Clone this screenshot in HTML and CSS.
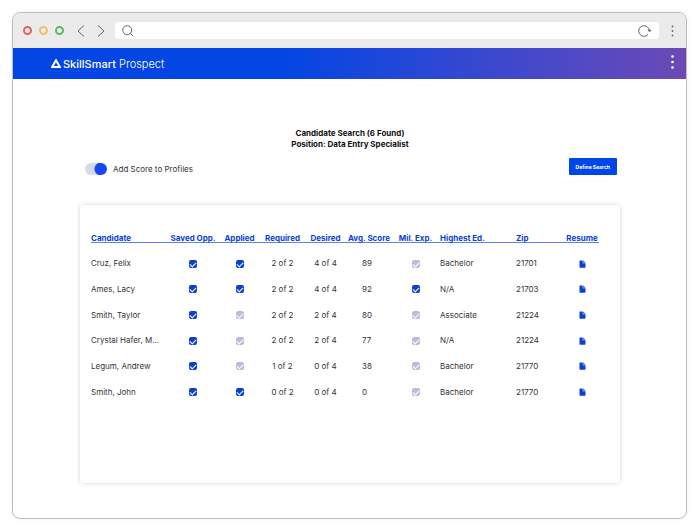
FILE: index.html
```html
<!DOCTYPE html>
<html lang="en">
<head>
  <meta charset="UTF-8" />
  <meta name="viewport" content="width=device-width, initial-scale=1.0"/>
  <title>SkillSmart Prospect</title>
  <link rel="stylesheet" href="styles.css">
</head>
<body>

  <!-- shared icons -->
  <svg class="sprite" aria-hidden="true">
    <symbol id="file" viewBox="0 0 7 8">
      <path d="M1 .5H3.700V2.700q0 .6.6.6H6.500V7q0 .7-.7.7H1.200Q.5 7.700.5 7V1Q.5.5 1 .5zM4.200.6 6.400 2.800H4.200z"/>
    </symbol>
  </svg>

  <div class="browser">
    <div class="browser-bar">
      <div class="dots">
        <span class="dot red"></span>
        <span class="dot yellow"></span>
        <span class="dot green"></span>
      </div>
      <div class="nav">
        <button type="button" class="icon-button" aria-label="Back">
          <svg width="8" height="12" viewBox="0 0 8 12"><path d="M7 .5 1 6l6 5.500"/></svg>
        </button>
        <button type="button" class="icon-button" aria-label="Forward">
          <svg width="8" height="12" viewBox="0 0 8 12"><path d="M1 .5 7 6l-6 5.500"/></svg>
        </button>
      </div>
      <div class="address">
        <svg width="12" height="12" viewBox="0 0 12 12"><circle cx="5.200" cy="5.200" r="4.500"/><path d="M8.300 8.300l3 3"/></svg>
        <input type="text" aria-label="Address">
        <button type="button" class="icon-button" aria-label="Reload">
          <svg width="14" height="12" viewBox="0 0 14 12"><path d="M11.300 6A5.300 5.300 0 1 0 10 9.500"/><path class="solid" d="M9.500 4.800h4L11.600 7.300z"/></svg>
        </button>
      </div>
      <button type="button" class="icon-button" aria-label="Browser menu">
        <svg class="solid" width="3" height="12" viewBox="0 0 3 12"><circle cx="1.500" cy="1.500" r=".9"/><circle cx="1.500" cy="6" r=".9"/><circle cx="1.500" cy="10.500" r=".9"/></svg>
      </button>
    </div>

    <header class="app-header">
      <div class="logo">
        <svg width="10" height="9" viewBox="0 0 10 9"><path d="M5 1.200 8.900 8H1.100z"/></svg>
        <div><b>SkillSmart</b> Prospect</div>
      </div>
      <button type="button" class="icon-button light" aria-label="Menu">
        <svg class="solid" width="3" height="14" viewBox="0 0 3 14"><circle cx="1.500" cy="1.500" r="1.300"/><circle cx="1.500" cy="7" r="1.300"/><circle cx="1.500" cy="12.500" r="1.300"/></svg>
      </button>
    </header>

    <main>
      <h1>Candidate Search (6 Found)<br>Position: Data Entry Specialist</h1>

      <div class="toolbar">
        <label class="toggle"><input type="checkbox" role="switch" checked> Add Score to Profiles</label>
        <button type="button" class="define">Define Search</button>
      </div>

      <div class="panel">
        <table>
          <colgroup>
            <col class="c-name"><col class="c-saved"><col class="c-applied"><col class="c-count"><col class="c-count">
            <col class="c-score"><col class="c-mil"><col class="c-ed"><col class="c-zip"><col class="c-resume">
          </colgroup>
          <thead>
            <tr>
              <th><a href="#">Candidate</a></th>
              <th class="center"><a href="#">Saved Opp.</a></th>
              <th class="center"><a href="#">Applied</a></th>
              <th class="center"><a href="#">Required</a></th>
              <th class="center"><a href="#">Desired</a></th>
              <th class="center"><a href="#">Avg. Score</a></th>
              <th class="center"><a href="#">Mil. Exp.</a></th>
              <th><a href="#">Highest Ed.</a></th>
              <th><a href="#">Zip</a></th>
              <th class="center"><a href="#">Resume</a></th>
            </tr>
          </thead>
          <tbody>
            <tr>
              <td>Cruz, Felix</td>
              <td class="center"><input type="checkbox" class="check" aria-label="Saved" checked></td>
              <td class="center"><input type="checkbox" class="check" aria-label="Applied" checked></td>
              <td class="center">2 of 2</td>
              <td class="center">4 of 4</td>
              <td class="score">89</td>
              <td class="center"><input type="checkbox" class="check" aria-label="Military experience"></td>
              <td>Bachelor</td>
              <td>21701</td>
              <td class="center"><a href="#" aria-label="Resume"><svg class="file"><use href="#file"/></svg></a></td>
            </tr>
            <tr>
              <td>Ames, Lacy</td>
              <td class="center"><input type="checkbox" class="check" aria-label="Saved" checked></td>
              <td class="center"><input type="checkbox" class="check" aria-label="Applied" checked></td>
              <td class="center">2 of 2</td>
              <td class="center">4 of 4</td>
              <td class="score">92</td>
              <td class="center"><input type="checkbox" class="check" aria-label="Military experience" checked></td>
              <td>N/A</td>
              <td>21703</td>
              <td class="center"><a href="#" aria-label="Resume"><svg class="file"><use href="#file"/></svg></a></td>
            </tr>
            <tr>
              <td>Smith, Taylor</td>
              <td class="center"><input type="checkbox" class="check" aria-label="Saved" checked></td>
              <td class="center"><input type="checkbox" class="check" aria-label="Applied"></td>
              <td class="center">2 of 2</td>
              <td class="center">2 of 4</td>
              <td class="score">80</td>
              <td class="center"><input type="checkbox" class="check" aria-label="Military experience"></td>
              <td>Associate</td>
              <td>21224</td>
              <td class="center"><a href="#" aria-label="Resume"><svg class="file"><use href="#file"/></svg></a></td>
            </tr>
            <tr>
              <td>Crystal Hafer, M...</td>
              <td class="center"><input type="checkbox" class="check" aria-label="Saved" checked></td>
              <td class="center"><input type="checkbox" class="check" aria-label="Applied"></td>
              <td class="center">2 of 2</td>
              <td class="center">2 of 4</td>
              <td class="score">77</td>
              <td class="center"><input type="checkbox" class="check" aria-label="Military experience"></td>
              <td>N/A</td>
              <td>21224</td>
              <td class="center"><a href="#" aria-label="Resume"><svg class="file"><use href="#file"/></svg></a></td>
            </tr>
            <tr>
              <td>Legum, Andrew</td>
              <td class="center"><input type="checkbox" class="check" aria-label="Saved" checked></td>
              <td class="center"><input type="checkbox" class="check" aria-label="Applied"></td>
              <td class="center">1 of 2</td>
              <td class="center">0 of 4</td>
              <td class="score">38</td>
              <td class="center"><input type="checkbox" class="check" aria-label="Military experience"></td>
              <td>Bachelor</td>
              <td>21770</td>
              <td class="center"><a href="#" aria-label="Resume"><svg class="file"><use href="#file"/></svg></a></td>
            </tr>
            <tr>
              <td>Smith, John</td>
              <td class="center"><input type="checkbox" class="check" aria-label="Saved" checked></td>
              <td class="center"><input type="checkbox" class="check" aria-label="Applied" checked></td>
              <td class="center">0 of 2</td>
              <td class="center">0 of 4</td>
              <td class="score">0</td>
              <td class="center"><input type="checkbox" class="check" aria-label="Military experience"></td>
              <td>Bachelor</td>
              <td>21770</td>
              <td class="center"><a href="#" aria-label="Resume"><svg class="file"><use href="#file"/></svg></a></td>
            </tr>
          </tbody>
        </table>
      </div>
    </main>
  </div>

</body>
</html>
```
FILE: styles.css
```css
* {
  box-sizing: border-box;
  margin: 0;
  padding: 0;
  font-family: Inter, 'Open Sans', sans-serif;
}

body {
  min-height: 100vh;
  padding: 12px 13px 10px 12px;
  display: flex;
  background: #fff;
  color: #333;
  font-size: 8px;
  line-height: 11px;
}

svg {
  display: block;
  fill: none;
  stroke: #666;
}

.solid {
  fill: #666;
  stroke: none;
}

.sprite {
  display: none;
}

.browser {
  flex: 1;
  border: 1px solid #bdbdbd;
  border-radius: 8px;
  overflow: hidden;
  box-shadow: 0 0 4px rgba(0, 0, 0, 0.06);
}

/* browser bar */
.browser-bar {
  height: 35px;
  padding: 0 12px 0 10px;
  display: flex;
  align-items: center;
  background: #ebebeb;
}

.dots {
  display: flex;
  gap: 7px;
}

.dot {
  width: 9px;
  height: 9px;
  border: 2px solid;
  border-radius: 50%;
}

.red {
  border-color: #e8605c;
}

.yellow {
  border-color: #f0c05c;
}

.green {
  border-color: #62b562;
}

.nav {
  display: flex;
  gap: 12px;
  margin: 0 10px 0 13px;
}

.icon-button {
  border: none;
  background: none;
  cursor: pointer;
}

.address {
  flex: 1;
  height: 17px;
  margin-right: 12px;
  padding: 0 7px;
  display: flex;
  align-items: center;
  background: #fff;
  border-radius: 3px;
}

.address input {
  flex: 1;
  min-width: 0;
  margin: 0 8px;
  border: none;
  outline: none;
}

/* app header */
.app-header {
  height: 31px;
  padding: 0 12px 0 38px;
  display: flex;
  align-items: center;
  justify-content: space-between;
  background: linear-gradient(90deg, #0346e3 0%, #0346e3 40%, #4a49c8 80%, #6b4ab5 100%);
  color: #fff;
}

.logo {
  display: flex;
  align-items: center;
  gap: 2px;
  font-size: 11px;
  font-weight: 300;
  line-height: 14px;
}

.logo svg {
  stroke: #fff;
  stroke-width: 2;
}

.logo b {
  font-weight: 500;
}

.light {
  align-self: flex-start;
  margin-top: 7px;
}

.light svg {
  fill: #fff;
}

/* content */
main {
  padding: 49px 66px 34px 67px;
}

h1 {
  font-size: 8px;
  font-weight: 700;
  text-align: center;
  color: #111;
}

.toolbar {
  display: flex;
  align-items: flex-end;
  justify-content: space-between;
  margin: 8px 3px 30px 5px;
}

.toggle {
  display: flex;
  align-items: center;
  gap: 6px;
}

.toggle input {
  appearance: none;
  width: 22px;
  height: 12px;
  border-radius: 6px;
  background: radial-gradient(circle at 16px 6px, #1747f0 6px, #d3dae8 7px);
}

.define {
  height: 17px;
  padding: 0 7px;
  border: none;
  border-radius: 1px;
  background: #0346e8;
  color: #fff;
  font-size: 5px;
  font-weight: 700;
  cursor: pointer;
}

.panel {
  min-height: 278px;
  padding: 24px 21px 24px 11px;
  border-radius: 3px;
  box-shadow: 0 0 4px rgba(0, 0, 0, 0.18);
}

table {
  width: 100%;
  height: 176px;
  table-layout: fixed;
  border-collapse: collapse;
}

.c-name { width: 77px; }
.c-saved { width: 50px; }
.c-applied { width: 43px; }
.c-count { width: 43px; }
.c-score { width: 44px; }
.c-mil { width: 49px; }
.c-ed { width: 76px; }
.c-zip { width: 49px; }
.c-resume { width: 34px; }

th {
  height: 22px;
  text-align: left;
  vertical-align: top;
}

th a {
  display: block;
  height: 14px;
  padding-top: 4px;
  border-bottom: 1px solid #5b83ee;
  color: #0a3fd6;
  font-weight: 700;
  line-height: 10px;
  text-decoration: none;
  white-space: nowrap;
}

td {
  white-space: nowrap;
}

.center {
  text-align: center;
}

.score {
  padding-left: 15px;
}

.check {
  appearance: none;
  display: block;
  width: 8px;
  height: 8px;
  margin: 0 auto;
  border-radius: 2px;
  background: #bdbbdc;
}

.check:checked {
  background: #0a3fd6;
}

.check::after {
  content: '';
  display: block;
  width: 5px;
  height: 3px;
  margin: 2px auto 0;
  border: solid #fff;
  border-width: 0 0 1px 1px;
  transform: rotate(-45deg);
}

.file {
  width: 7px;
  height: 8px;
  margin: 0 auto;
  fill: #0a3fd6;
  stroke: none;
}
```
